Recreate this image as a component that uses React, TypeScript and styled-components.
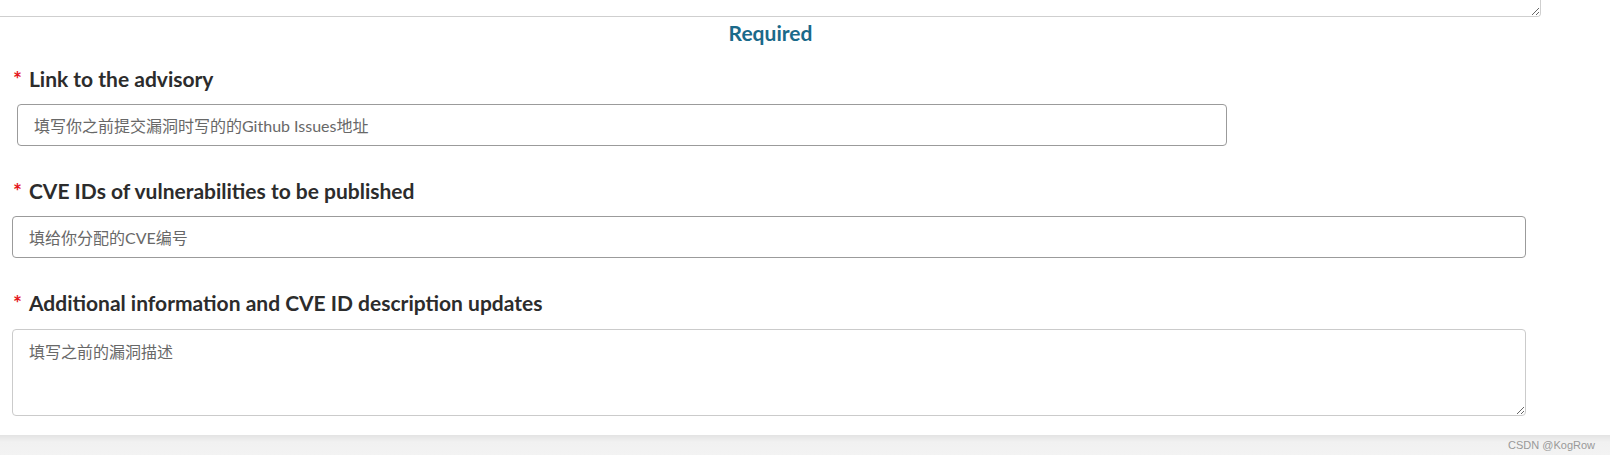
import React from "react";
import styled, { createGlobalStyle } from "styled-components";

const Global = createGlobalStyle`
  html, body { margin: 0; padding: 0; background: #fff; }
  body { font-family: "Lato", "Noto Sans CJK SC", sans-serif; }
  * { box-sizing: border-box; }
`;

const Page = styled.div`
  width: 1610px;
  height: 460px;
  display: flex;
  flex-direction: column;
  overflow: hidden;
`;

const Main = styled.div`
  width: 1541px;
  display: flex;
  flex-direction: column;
`;

const PrevFieldClip = styled.div`
  width: 100%;
  height: 17px;
  overflow: hidden;
  display: flex;
`;

const PrevTextArea = styled.textarea`
  flex: none;
  width: calc(100% + 6px);
  margin-left: -6px;
  height: 17px;
  border: 1px solid #cfcfcf;
  border-top: none;
  border-radius: 0 0 4px 4px;
  background: #fff;
  resize: vertical;
  outline: none;
`;

const SectionTitle = styled.div`
  margin-top: 4px;
  text-align: center;
  font-family: "Lato", sans-serif;
  font-weight: 700;
  font-size: 21px;
  line-height: 24px;
  color: #1a6a8a;
`;

const Form = styled.div`
  display: flex;
  flex-direction: column;
  gap: 33px;
  padding: 22px 0 0 12px;
`;

const Field = styled.div`
  display: flex;
  flex-direction: column;
  gap: 13px;
`;

const Label = styled.label`
  display: flex;
  align-items: baseline;
  font-family: "Lato", sans-serif;
  font-weight: 700;
  font-size: 21px;
  line-height: 24px;
  color: #2c2c2c;
`;

const Star = styled.span`
  color: #e4141b;
  font-size: 21px;
  margin: 0 7px 0 1px;
`;

const TextInput = styled.input<{ $width: number; $inset?: number }>`
  width: ${(p) => p.$width}px;
  margin-left: ${(p) => p.$inset ?? 0}px;
  height: 42px;
  padding: 0 16px;
  border: 1px solid #9b9b9b;
  border-radius: 4px;
  font-family: "Lato", "Noto Sans CJK SC", sans-serif;
  font-size: 16px;
  color: #333;
  outline: none;
  &::placeholder {
    color: #686868;
  }
`;

const TextArea = styled.textarea`
  width: 1514px;
  height: 87px;
  margin-top: 1px;
  padding: 10px 16px;
  border: 1px solid #cbcbcb;
  border-radius: 4px;
  font-family: "Lato", "Noto Sans CJK SC", sans-serif;
  font-size: 16px;
  line-height: 24px;
  color: #333;
  resize: vertical;
  outline: none;
  &::placeholder {
    color: #686868;
  }
`;

const Spacer = styled.div`
  flex: 1;
`;

const BottomBand = styled.div`
  height: 20px;
  margin-bottom: 5px;
  display: flex;
  align-items: center;
  justify-content: flex-end;
  padding-right: 15px;
  background: linear-gradient(#e3e3e3, #f1f1f1 35%, #f3f3f3);
`;

const Watermark = styled.span`
  font-family: "Liberation Sans", Arial, sans-serif;
  font-size: 11px;
  color: #999;
`;

const fields = [
  {
    label: "Link to the advisory",
    placeholder: "填写你之前提交漏洞时写的的Github Issues地址",
    width: 1210,
    inset: 5,
    kind: "input",
  },
  {
    label: "CVE IDs of vulnerabilities to be published",
    placeholder: "填给你分配的CVE编号",
    width: 1514,
    inset: 0,
    kind: "input",
  },
  {
    label: "Additional information and CVE ID description updates",
    placeholder: "填写之前的漏洞描述",
    width: 1514,
    inset: 0,
    kind: "textarea",
  },
];

export default function App() {
  return (
    <Page>
      <Global />
      <Main>
        <PrevFieldClip>
          <PrevTextArea />
        </PrevFieldClip>
        <SectionTitle>Required</SectionTitle>
        <Form>
          {fields.map((f) => (
            <Field key={f.label}>
              <Label>
                <Star>*</Star>
                {f.label}
              </Label>
              {f.kind === "input" ? (
                <TextInput $width={f.width} $inset={f.inset} placeholder={f.placeholder} />
              ) : (
                <TextArea placeholder={f.placeholder} />
              )}
            </Field>
          ))}
        </Form>
      </Main>
      <Spacer />
      <BottomBand>
        <Watermark>CSDN @KogRow</Watermark>
      </BottomBand>
    </Page>
  );
}
